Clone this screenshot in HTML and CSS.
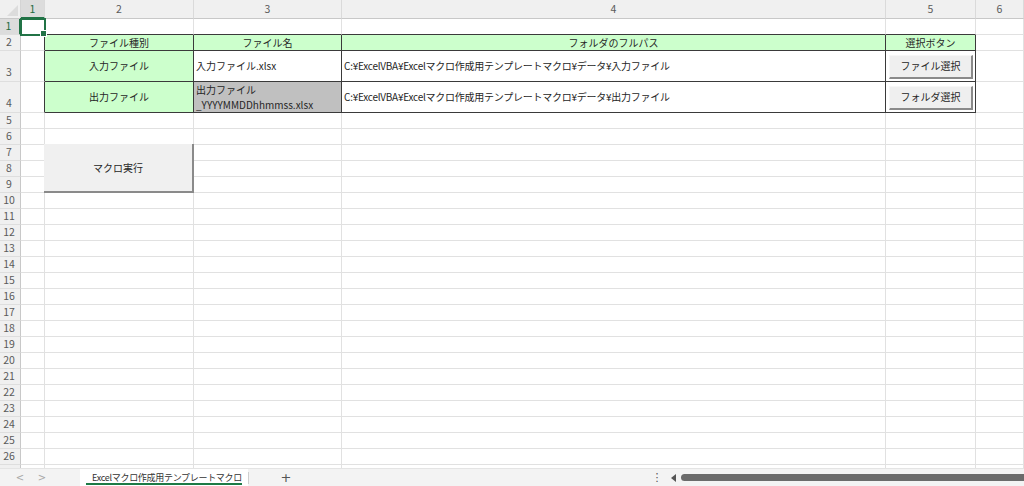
FILE: index.html
```html
<!DOCTYPE html>
<html lang="ja">
<head>
<meta charset="utf-8">
<title>Excelマクロ作成用テンプレートマクロ</title>
<link rel="stylesheet" href="styles.css">
</head>
<body>
<div class="app">
  <div class="sheet">
    <div class="corner"></div><div class="ch sel">1</div><div class="ch">2</div><div class="ch">3</div><div class="ch">4</div><div class="ch">5</div><div class="ch">6</div>

    <div class="rh sel">1</div><div class="c a1"></div><div class="c bt"></div><div class="c bt"></div><div class="c bt"></div><div class="c bt"></div><div class="c"></div>

    <div class="rh">2</div><div class="c br"></div><div class="t g ctr">ファイル種別</div><div class="t g ctr">ファイル名</div><div class="t g ctr">フォルダのフルパス</div><div class="t g ctr">選択ボタン</div><div class="c"></div>

    <div class="rh low">3</div><div class="c br"></div><div class="t g ctr">入力ファイル</div><div class="t lft">入力ファイル.xlsx</div><div class="t lft path">C:¥ExcelVBA¥Excelマクロ作成用テンプレートマクロ¥データ¥入力ファイル</div><div class="t bcell"><button class="fbtn">ファイル選択</button></div><div class="c"></div>

    <div class="rh low">4</div><div class="c br"></div><div class="t g ctr">出力ファイル</div><div class="t gray wrap">出力ファイル<br>_YYYYMMDDhhmmss.xlsx</div><div class="t lft path">C:¥ExcelVBA¥Excelマクロ作成用テンプレートマクロ¥データ¥出力ファイル</div><div class="t bcell"><button class="fbtn">フォルダ選択</button></div><div class="c"></div>

    <div class="rh">5</div><div class="c"></div><div class="c"></div><div class="c"></div><div class="c"></div><div class="c"></div><div class="c"></div>
    <div class="rh">6</div><div class="c"></div><div class="c"></div><div class="c"></div><div class="c"></div><div class="c"></div><div class="c"></div>
    <div class="rh">7</div><div class="c"></div><button class="macro">マクロ実行</button><div class="c"></div><div class="c"></div><div class="c"></div><div class="c"></div>
    <div class="rh">8</div><div class="c"></div><div class="c"></div><div class="c"></div><div class="c"></div><div class="c"></div>
    <div class="rh">9</div><div class="c"></div><div class="c"></div><div class="c"></div><div class="c"></div><div class="c"></div>
    <div class="rh">10</div><div class="c"></div><div class="c"></div><div class="c"></div><div class="c"></div><div class="c"></div><div class="c"></div>
    <div class="rh">11</div><div class="c"></div><div class="c"></div><div class="c"></div><div class="c"></div><div class="c"></div><div class="c"></div>
    <div class="rh">12</div><div class="c"></div><div class="c"></div><div class="c"></div><div class="c"></div><div class="c"></div><div class="c"></div>
    <div class="rh">13</div><div class="c"></div><div class="c"></div><div class="c"></div><div class="c"></div><div class="c"></div><div class="c"></div>
    <div class="rh">14</div><div class="c"></div><div class="c"></div><div class="c"></div><div class="c"></div><div class="c"></div><div class="c"></div>
    <div class="rh">15</div><div class="c"></div><div class="c"></div><div class="c"></div><div class="c"></div><div class="c"></div><div class="c"></div>
    <div class="rh">16</div><div class="c"></div><div class="c"></div><div class="c"></div><div class="c"></div><div class="c"></div><div class="c"></div>
    <div class="rh">17</div><div class="c"></div><div class="c"></div><div class="c"></div><div class="c"></div><div class="c"></div><div class="c"></div>
    <div class="rh">18</div><div class="c"></div><div class="c"></div><div class="c"></div><div class="c"></div><div class="c"></div><div class="c"></div>
    <div class="rh">19</div><div class="c"></div><div class="c"></div><div class="c"></div><div class="c"></div><div class="c"></div><div class="c"></div>
    <div class="rh">20</div><div class="c"></div><div class="c"></div><div class="c"></div><div class="c"></div><div class="c"></div><div class="c"></div>
    <div class="rh">21</div><div class="c"></div><div class="c"></div><div class="c"></div><div class="c"></div><div class="c"></div><div class="c"></div>
    <div class="rh">22</div><div class="c"></div><div class="c"></div><div class="c"></div><div class="c"></div><div class="c"></div><div class="c"></div>
    <div class="rh">23</div><div class="c"></div><div class="c"></div><div class="c"></div><div class="c"></div><div class="c"></div><div class="c"></div>
    <div class="rh">24</div><div class="c"></div><div class="c"></div><div class="c"></div><div class="c"></div><div class="c"></div><div class="c"></div>
    <div class="rh">25</div><div class="c"></div><div class="c"></div><div class="c"></div><div class="c"></div><div class="c"></div><div class="c"></div>
    <div class="rh">26</div><div class="c"></div><div class="c"></div><div class="c"></div><div class="c"></div><div class="c"></div><div class="c"></div>
    <div class="rh">27</div><div class="c"></div><div class="c"></div><div class="c"></div><div class="c"></div><div class="c"></div><div class="c"></div>
  </div>

  <div class="tabbar">
    <div class="nav"><span>&lt;</span><span>&gt;</span></div>
    <div class="tab">Excelマクロ作成用テンプレートマクロ</div>
    <div class="sep"></div>
    <div class="plus">+</div>
    <div class="spacer"></div>
    <div class="dots">⋮</div>
    <div class="larr">
      <svg width="6" height="8" viewBox="0 0 6 8"><path d="M5 0 L0 4 L5 8 Z" fill="#555"/></svg>
    </div>
    <div class="thumb"></div>
  </div>
</div>
</body>
</html>
```

FILE: styles.css
```css
* { box-sizing: border-box; }

html, body {
  margin: 0;
  padding: 0;
  background: #ffffff;
}

body {
  width: 1024px;
  height: 486px;
  overflow: hidden;
  font-family: "Noto Sans CJK JP", "Noto Sans", sans-serif;
  font-size: 10px;
  color: #262626;
}

.app {
  display: flex;
  flex-direction: column;
  height: 486px;
}

.sheet {
  display: grid;
  grid-template-columns: 21px 24px 149px 148px 544px 90px 1fr;
  grid-template-rows: 19px 16px 16px 31px 31px repeat(23, 16px);
  height: 468px;
  overflow: hidden;
  flex: none;
}

/* headers */
.corner {
  position: relative;
  background: #f0f0f0;
  border-right: 1px solid #d4d4d4;
  border-bottom: 1px solid #c8c8c8;
}
.corner::after {
  content: "";
  position: absolute;
  right: 2px;
  bottom: 2px;
  width: 0;
  height: 0;
  border-left: 11px solid transparent;
  border-bottom: 11px solid #dcdcdc;
}

.ch {
  background: #f0f0f0;
  border-right: 1px solid #dadada;
  border-bottom: 1px solid #c8c8c8;
  color: #5a5a5a;
  font-size: 10.5px;
  display: flex;
  align-items: center;
  justify-content: center;
  line-height: 1;
}
.ch.sel {
  background: #dcdcdc;
  color: #1e6b41;
  border-bottom: 2px solid #217346;
  padding-top: 1px;
}

.rh {
  background: #f0f0f0;
  border-right: 1px solid #c8c8c8;
  border-bottom: 1px solid #dedede;
  color: #5a5a5a;
  font-size: 10.5px;
  display: flex;
  align-items: center;
  justify-content: center;
  padding-right: 2px;
  line-height: 1;
}
.rh.low {
  align-items: flex-end;
  padding-bottom: 4px;
}
.rh.sel {
  background: #dcdcdc;
  color: #1e6b41;
  border-right: 2px solid #217346;
}

/* cells */
.c {
  border-right: 1px solid #e1e1e1;
  border-bottom: 1px solid #e1e1e1;
}
.c.bt { border-bottom-color: #3a3a3a; }
.c.br { border-right-color: #3a3a3a; }

.a1 {
  position: relative;
  z-index: 2;
  outline: 2px solid #217346;
  outline-offset: -1px;
}
.a1::after {
  content: "";
  position: absolute;
  right: -3px;
  bottom: -3px;
  width: 5px;
  height: 5px;
  background: #217346;
  border: 1px solid #ffffff;
}

.t {
  border-right: 1px solid #3a3a3a;
  border-bottom: 1px solid #3a3a3a;
  display: flex;
  align-items: center;
  white-space: nowrap;
  overflow: hidden;
  line-height: 1.2;
}
.t.g { background: #ccffcc; }
.t.ctr { justify-content: center; }
.t.lft { padding-left: 2px; }
.t.path { letter-spacing: -0.25px; }
.t.gray {
  background: #c0c0c0;
  padding-left: 2px;
}
.t.wrap {
  line-height: 15px;
  align-items: center;
}
.t.bcell {
  padding-left: 3px;
  padding-top: 1px;
}

.fbtn {
  width: 84px;
  height: 24px;
  margin: 0;
  padding: 0;
  background: #efefef;
  border-top: 1px solid #f7f7f7;
  border-left: 1px solid #f7f7f7;
  border-right: 2px solid #8a8a8a;
  border-bottom: 2px solid #8a8a8a;
  font-family: inherit;
  font-size: 10px;
  color: #262626;
  line-height: 1;
}

.macro {
  grid-column: 3;
  grid-row: 8 / 11;
  margin: -1px 0 0 -1px;
  position: relative;
  z-index: 1;
  padding: 0;
  background: #f0f0f0;
  border: none;
  border-right: 2px solid #8a8a8a;
  border-bottom: 2px solid #8a8a8a;
  font-family: inherit;
  font-size: 10px;
  color: #262626;
}

/* tab bar */
.tabbar {
  flex: none;
  height: 18px;
  display: flex;
  align-items: center;
  background: #f3f3f3;
  border-top: 1px solid #e4e4e4;
  color: #444;
}
.nav {
  width: 80px;
  height: 100%;
  display: flex;
  align-items: center;
  padding-left: 9px;
  flex: none;
}
.nav span {
  width: 22px;
  text-align: center;
  color: #a8a8a8;
  font-family: "DejaVu Sans", sans-serif;
  font-size: 10px;
  line-height: 1;
}
.tab {
  position: relative;
  width: 168px;
  height: 100%;
  background: #ffffff;
  display: flex;
  align-items: center;
  justify-content: center;
  padding-left: 6px;
  font-size: 9px;
  letter-spacing: -0.3px;
  color: #333;
  flex: none;
  white-space: nowrap;
}
.tab::after {
  content: "";
  position: absolute;
  left: 6px;
  right: 6px;
  bottom: 1px;
  height: 2px;
  background: #1d7a45;
}
.sep {
  width: 1px;
  height: 12px;
  background: #cfcfcf;
  flex: none;
}
.plus {
  width: 74px;
  text-align: center;
  font-family: "DejaVu Sans", sans-serif;
  font-size: 13px;
  color: #555;
  flex: none;
  line-height: 1;
}
.spacer { flex: 1; }
.dots {
  width: 12px;
  text-align: center;
  font-family: "DejaVu Sans", sans-serif;
  font-size: 11px;
  color: #555;
  margin-right: 4px;
  flex: none;
  line-height: 1;
}
.larr {
  width: 14px;
  height: 100%;
  display: flex;
  align-items: center;
  justify-content: center;
  flex: none;
}
.thumb {
  width: 343px;
  height: 7px;
  background: #6b6b6b;
  border-radius: 4px 0 0 4px;
  flex: none;
}
```
